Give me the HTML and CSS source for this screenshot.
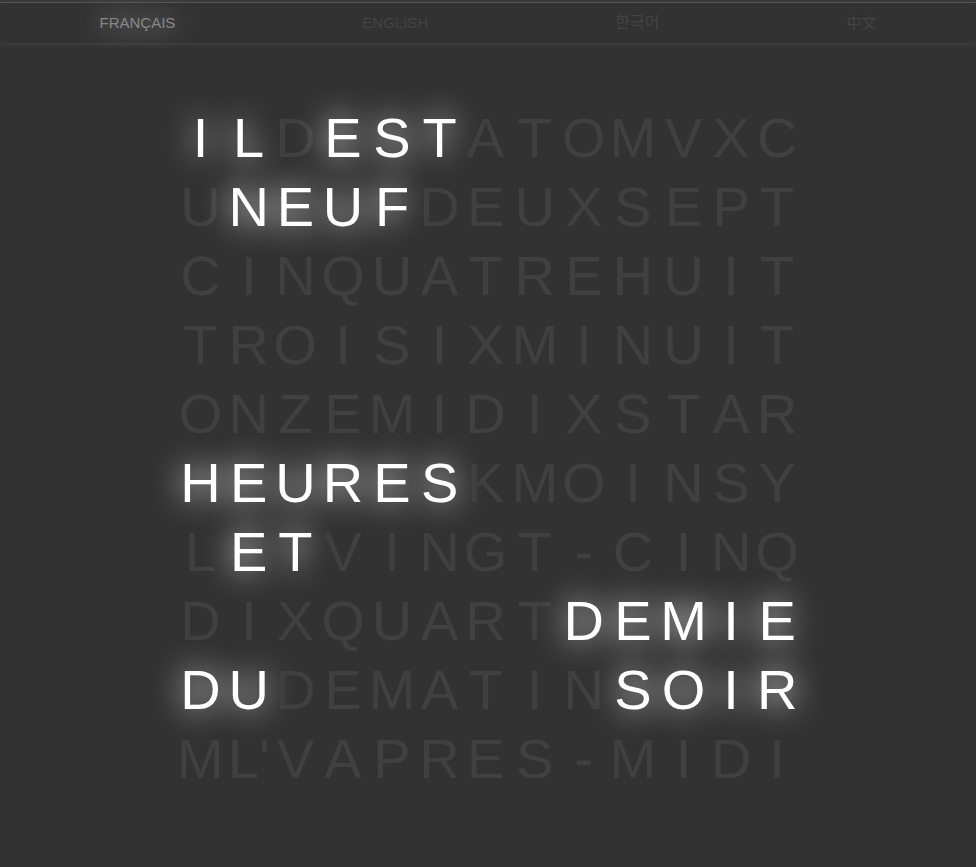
FILE: index.html
```
<!DOCTYPE html>
<html lang="fr">
<head>
<meta charset="utf-8">
<title>Horloge</title>
<link rel="stylesheet" href="styles.css">
</head>
<body>
<nav class="languages">
<a class="language active" href="#fr">FRANÇAIS</a>
<a class="language" href="#en" lang="en">ENGLISH</a>
<a class="language" href="#ko" lang="ko">한국어</a>
<a class="language" href="#zh" lang="zh">中文</a>
</nav>
<main>
<table class="clock">
<tbody>
<tr><td class="on">I</td><td class="on">L</td><td>D</td><td class="on">E</td><td class="on">S</td><td class="on">T</td><td>A</td><td>T</td><td>O</td><td>M</td><td>V</td><td>X</td><td>C</td></tr>
<tr><td>U</td><td class="on">N</td><td class="on">E</td><td class="on">U</td><td class="on">F</td><td>D</td><td>E</td><td>U</td><td>X</td><td>S</td><td>E</td><td>P</td><td>T</td></tr>
<tr><td>C</td><td>I</td><td>N</td><td>Q</td><td>U</td><td>A</td><td>T</td><td>R</td><td>E</td><td>H</td><td>U</td><td>I</td><td>T</td></tr>
<tr><td>T</td><td>R</td><td>O</td><td>I</td><td>S</td><td>I</td><td>X</td><td>M</td><td>I</td><td>N</td><td>U</td><td>I</td><td>T</td></tr>
<tr><td>O</td><td>N</td><td>Z</td><td>E</td><td>M</td><td>I</td><td>D</td><td>I</td><td>X</td><td>S</td><td>T</td><td>A</td><td>R</td></tr>
<tr><td class="on">H</td><td class="on">E</td><td class="on">U</td><td class="on">R</td><td class="on">E</td><td class="on">S</td><td>K</td><td>M</td><td>O</td><td>I</td><td>N</td><td>S</td><td>Y</td></tr>
<tr><td>L</td><td class="on">E</td><td class="on">T</td><td>V</td><td>I</td><td>N</td><td>G</td><td>T</td><td>-</td><td>C</td><td>I</td><td>N</td><td>Q</td></tr>
<tr><td>D</td><td>I</td><td>X</td><td>Q</td><td>U</td><td>A</td><td>R</td><td>T</td><td class="on">D</td><td class="on">E</td><td class="on">M</td><td class="on">I</td><td class="on">E</td></tr>
<tr><td class="on">D</td><td class="on">U</td><td>D</td><td>E</td><td>M</td><td>A</td><td>T</td><td>I</td><td>N</td><td class="on">S</td><td class="on">O</td><td class="on">I</td><td class="on">R</td></tr>
<tr><td>M</td><td>L'</td><td>V</td><td>A</td><td>P</td><td>R</td><td>E</td><td>S</td><td>-</td><td>M</td><td>I</td><td>D</td><td>I</td></tr>
</tbody>
</table>
</main>
</body>
</html>
```
FILE: styles.css
```
body {
  margin: 0;
  background: #323232;
  color: #404040;
  font-family: "Liberation Sans", Arial, "Noto Sans CJK KR", "Noto Sans CJK SC", sans-serif;
}

.languages {
  display: flex;
  justify-content: space-around;
  margin-top: 2px;
  padding: 10px 6px;
  border-top: 1px solid #555;
  box-shadow: 0 0 6px #484848;
  background: #323232;
  font-size: 15px;
  line-height: 20px;
}

.language {
  color: #444;
  text-decoration: none;
}

.language:lang(ko) {
  font-size: 16px;
}

.language.active {
  color: #888;
  text-shadow: 0 0 30px #fff;
}

.clock {
  margin: 59px auto 0;
  border-spacing: 2px;
  font-size: 56px;
  line-height: 65px;
  text-align: center;
}

.clock td {
  padding: 1px;
}

.clock .on {
  color: #fff;
  text-shadow: 0 0 30px #fff;
}
```
